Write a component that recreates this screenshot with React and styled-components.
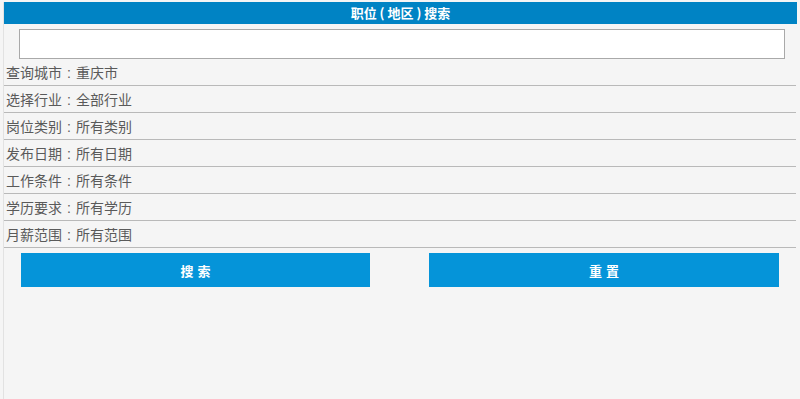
import React from "react";
import styled, { createGlobalStyle } from "styled-components";

const Global = createGlobalStyle`
    html, body {
        margin: 0;
        padding: 0;
        background: #f5f5f5;
        font-family: "Noto Sans CJK SC", "Liberation Sans", sans-serif;
    }
`

const Panel = styled.div`
    width: 794px;
    margin: 2px 0 0 3px;
    border-left: 1px solid #e2e2e2;
    box-sizing: border-box;
    height: 397px;
`
const Header = styled.div`
    height: 22px;
    background: #0083c4;
    color: #fff;
    font-size: 13px;
    font-weight: bold;
    line-height: 22px;
    text-align: center;
`
const SearchBox = styled.div`
    padding: 5px 12px 0 15px;
`
const Input = styled.input`
    display: block;
    width: 766px;
    height: 30px;
    box-sizing: border-box;
    border: 1px solid #a9a9a9;
    background: #fff;
    outline: none;
`
const Row = styled.div`
    width: 790px;
    height: 26px;
    line-height: 26px;
    border-bottom: 1px solid #b9b9b9;
    font-size: 14px;
    color: #5a5a5a;
    padding-left: 2px;
    box-sizing: content-box;
`
const Colon = styled.span`
    display: inline-block;
    width: 14px;
    text-align: center;
    font-family: "Liberation Sans", sans-serif;
`
const Buttons = styled.div`
    display: flex;
    justify-content: space-between;
    padding: 5px 18px 0 17px;
`
const Button = styled.button`
    width: ${props => props.w}px;
    height: 34px;
    border: none;
    background: #0594d9;
    color: #fff;
    font-family: "Noto Sans CJK SC", "Liberation Sans", sans-serif;
    font-size: 13px;
    font-weight: bold;
    letter-spacing: 4px;
    padding: 0 0 0 4px;
`

const rows = [
    ["查询城市", "重庆市"],
    ["选择行业", "全部行业"],
    ["岗位类别", "所有类别"],
    ["发布日期", "所有日期"],
    ["工作条件", "所有条件"],
    ["学历要求", "所有学历"],
    ["月薪范围", "所有范围"],
]

const App = () => {
    return (
        <Panel>
            <Global/>
            <Header>职位 ( 地区 ) 搜索</Header>
            <SearchBox>
                <Input type="text"/>
            </SearchBox>
            {rows.map(([k, v]) => (
                <Row key={k}>{k}<Colon>:</Colon>{v}</Row>
            ))}
            <Buttons>
                <Button w={349}>搜索</Button>
                <Button w={350}>重置</Button>
            </Buttons>
        </Panel>
    )
}

export default App;
